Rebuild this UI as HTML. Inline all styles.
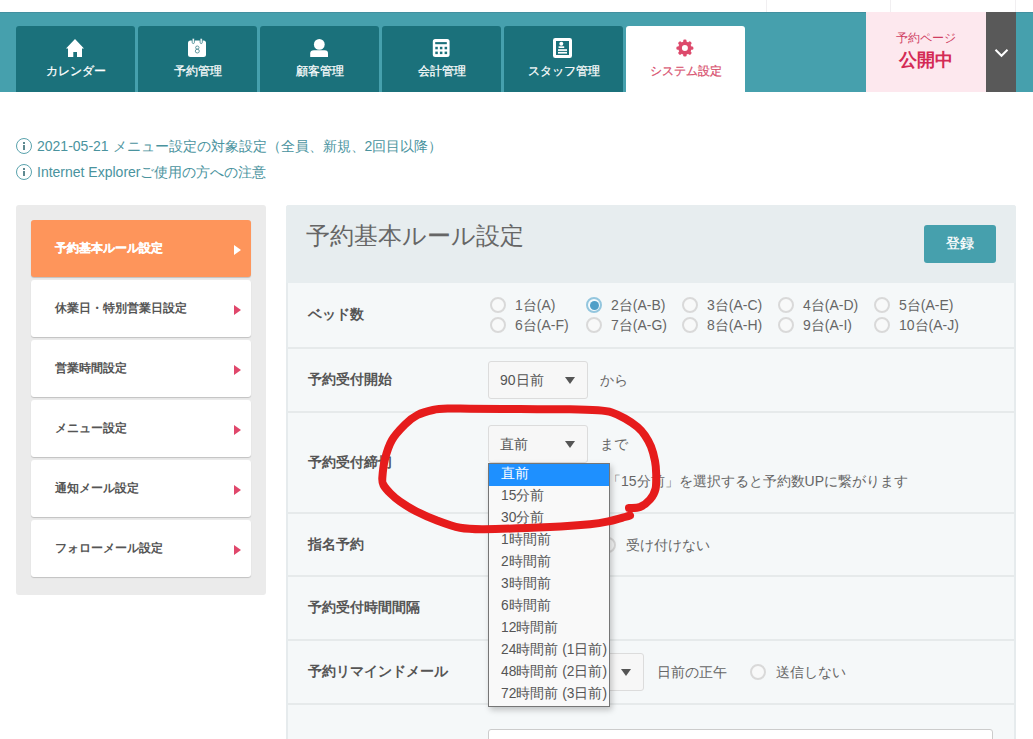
<!DOCTYPE html>
<html><head><meta charset="utf-8">
<style>
*{box-sizing:border-box;margin:0;padding:0}
html,body{width:1033px;height:739px;overflow:hidden;background:#fff}
body{position:relative;font-family:"Liberation Sans",sans-serif;color:#666;font-size:14px;line-height:1}
.a{position:absolute}
.vl{position:absolute;top:0;width:1px;height:12px;background:#f1eff1}
#band{left:0;top:12px;width:1033px;height:80px;background:#46a0ad;border-top:1px solid #4290a0}
.tab{position:absolute;top:26px;width:119px;height:66px;background:#1b717b;border-radius:3px 3px 0 0;color:#fff}
.tab .lb{-webkit-text-stroke:0.25px currentColor;position:absolute;left:0;width:100%;top:38px;text-align:center;font-size:12px;line-height:14px;white-space:nowrap}
.tab svg{position:absolute;left:0;top:0}
.tab.on{background:#fff;color:#d8516f}
#pink{left:866px;top:12px;width:120px;height:80px;background:#fde8ee;text-align:center}
#pink .t1{position:absolute;left:0;width:100%;top:19px;font-size:12px;line-height:14px;color:#cf3e62}
#pink .t2{position:absolute;left:0;width:100%;top:39px;font-size:18px;line-height:18px;font-weight:bold;color:#d42a55}
#dark{left:986px;top:12px;width:30px;height:80px;background:#595959}
.info{position:absolute;left:16px;height:16px;color:#4a939e;font-size:14px;line-height:16px;white-space:nowrap}
.info .ic{position:absolute;left:0;top:0;width:16px;height:16px;border:1.3px solid #5aa3ad;border-radius:50%}
.info .ic:before{content:"";position:absolute;left:6.2px;top:3px;width:1.4px;height:1.6px;background:#5f8a91}
.info .ic:after{content:"";position:absolute;left:6.2px;top:5.6px;width:1.4px;height:5.8px;background:#5f8a91}
.info .tx{position:absolute;left:21px;top:0}
#side{left:16px;top:205px;width:250px;height:390px;background:#ebebeb;border-radius:3px}
.si{position:absolute;left:31px;width:220px;height:57px;background:#fff;border-radius:3px;box-shadow:0 1px 1px rgba(0,0,0,.18);color:#555;font-weight:bold;font-size:12px}
.si .tx{position:absolute;left:24px;top:20.5px;line-height:14px;white-space:nowrap}
.si .tri{position:absolute;left:203px;top:24.5px;width:0;height:0;border-left:7px solid #e0476b;border-top:5.5px solid transparent;border-bottom:5.5px solid transparent}
.si.on{background:#fe955b;color:#fff}
.si.on .tx{-webkit-text-stroke:0.2px #fff}
.si.on .tri{border-left-color:#fff}
#panel{left:286px;top:205px;width:730px;height:560px;background:#f5f8f9;border:2px solid #e6ebed;border-top:0;border-radius:3px 3px 0 0}
#phead{left:286px;top:205px;width:730px;height:78px;background:#e7edef;border-radius:3px 3px 0 0}
#title{left:306px;top:223px;font-size:23.7px;line-height:26px;color:#666;white-space:nowrap}
#btn{-webkit-text-stroke:0.3px #fff;left:924px;top:225px;width:72px;height:38px;background:#46a0ad;border-radius:3px;color:#fff;font-size:14px;line-height:36px;text-align:center}
.div{position:absolute;left:288px;width:726px;height:2px;background:#e6eaeb}
.lab{position:absolute;left:308px;font-weight:bold;font-size:14px;line-height:16px;color:#555;white-space:nowrap}
.rad{position:absolute;width:16px;height:16px;border:2px solid #d9d9d9;border-radius:50%;background:#f8f9f9}
.rad.on{border-color:#93c6de;background:#f4fafd}
.rad.on:after{content:"";position:absolute;left:1.5px;top:1.5px;width:9px;height:9px;border-radius:50%;background:#4f9fc8}
.txt{position:absolute;font-size:14px;line-height:16px;color:#666;white-space:nowrap}
.sel{position:absolute;height:38px;background:#f7f7f7;border:1px solid #dcdcdc;border-radius:3px}
.sel .v{position:absolute;left:11px;top:10px;font-size:14px;line-height:16px;color:#555;white-space:nowrap}
.sel .ar{position:absolute;top:15px;width:0;height:0;border-top:7px solid #555;border-left:5.5px solid transparent;border-right:5.5px solid transparent}
#dd{left:488px;top:463px;width:122px;height:244px;background:#f9f9f9;border:1px solid #767676;box-shadow:2px 3px 6px rgba(0,0,0,.22)}
#dd .it{position:absolute;left:0;width:120px;height:22px;font-size:13.8px;line-height:20px;padding-left:12px;color:#555;white-space:nowrap}
#dd .it.on{background:#1e90ff;color:#fff}
#inp{left:488px;top:729px;width:505px;height:40px;background:#fff;border:1px solid #ccc;border-radius:3px}
</style></head><body>
<div class="vl" style="left:766px"></div>
<div class="vl" style="left:890px"></div>
<div class="vl" style="left:1015px"></div>
<div id="band" class="a"></div>

<div class="tab" style="left:16px">
<svg width="119" height="66"><path d="M59 13 L68 22.5 L66 22.5 L66 31 L61 31 L61 26 L57.3 26 L57.3 31 L52 31 L52 22.5 L50 22.5 Z" fill="#fff"/></svg>
<div class="lb">カレンダー</div></div>
<div class="tab" style="left:138px">
<svg width="119" height="66"><rect x="50" y="14.6" width="18" height="16.4" rx="2.5" fill="#fff"/><rect x="54.2" y="12.3" width="2.2" height="5.2" rx="1.1" fill="#fff" stroke="#1b717b" stroke-width="0.7"/><rect x="62.1" y="12.3" width="2.2" height="5.2" rx="1.1" fill="#fff" stroke="#1b717b" stroke-width="0.7"/><g fill="none" stroke="#4f8c94" stroke-width="0.9"><ellipse cx="59.3" cy="21.6" rx="1.7" ry="1.6"/><ellipse cx="59.3" cy="25.1" rx="2" ry="1.9"/></g></svg>
<div class="lb">予約管理</div></div>
<div class="tab" style="left:260px">
<svg width="119" height="66"><circle cx="59.3" cy="18.4" r="5.4" fill="#fff"/><path d="M50.2 31 L50.2 27.5 Q50.2 24.3 54 24.3 L64.5 24.3 Q68 24.3 68 27.5 L68 31 Z" fill="#fff"/></svg>
<div class="lb">顧客管理</div></div>
<div class="tab" style="left:382px">
<svg width="119" height="66"><rect x="50.8" y="13.1" width="16.8" height="17.9" rx="2.5" fill="#fff"/><rect x="53.2" y="16.1" width="11.6" height="2.1" fill="#1b717b"/><g fill="#1b717b"><rect x="53.3" y="20.8" width="2.5" height="2.5"/><rect x="57.9" y="20.8" width="2.5" height="2.5"/><rect x="62.6" y="20.8" width="2.5" height="2.5"/><rect x="53.3" y="25.6" width="2.5" height="2.5"/><rect x="57.9" y="25.6" width="2.5" height="2.5"/><rect x="62.6" y="25.6" width="2.5" height="2.5"/></g></svg>
<div class="lb">会計管理</div></div>
<div class="tab" style="left:504px">
<svg width="119" height="66"><rect x="50.5" y="13.5" width="16" height="17" fill="none" stroke="#fff" stroke-width="3" rx="0.8"/><circle cx="57.3" cy="17.8" r="2" fill="#fff"/><rect x="54.6" y="20.3" width="5.6" height="1.7" fill="#fff"/><rect x="54" y="23.2" width="9" height="1.7" fill="#fff"/><rect x="54" y="25.9" width="9" height="1.7" fill="#fff"/></svg>
<div class="lb">スタッフ管理</div></div>
<div class="tab on" style="left:626px">
<svg width="119" height="66"><circle cx="58.90" cy="22.10" r="4.8" fill="none" stroke="#dd4a6c" stroke-width="3.6"/><rect x="57.20" y="13.60" width="3.4" height="4.4" rx="1.3" fill="#dd4a6c" transform="rotate(0 58.90 22.10)"/><rect x="57.20" y="13.60" width="3.4" height="4.4" rx="1.3" fill="#dd4a6c" transform="rotate(45 58.90 22.10)"/><rect x="57.20" y="13.60" width="3.4" height="4.4" rx="1.3" fill="#dd4a6c" transform="rotate(90 58.90 22.10)"/><rect x="57.20" y="13.60" width="3.4" height="4.4" rx="1.3" fill="#dd4a6c" transform="rotate(135 58.90 22.10)"/><rect x="57.20" y="13.60" width="3.4" height="4.4" rx="1.3" fill="#dd4a6c" transform="rotate(180 58.90 22.10)"/><rect x="57.20" y="13.60" width="3.4" height="4.4" rx="1.3" fill="#dd4a6c" transform="rotate(225 58.90 22.10)"/><rect x="57.20" y="13.60" width="3.4" height="4.4" rx="1.3" fill="#dd4a6c" transform="rotate(270 58.90 22.10)"/><rect x="57.20" y="13.60" width="3.4" height="4.4" rx="1.3" fill="#dd4a6c" transform="rotate(315 58.90 22.10)"/></svg>
<div class="lb">システム設定</div></div>

<div id="pink" class="a"><div class="t1">予約ページ</div><div class="t2">公開中</div></div>
<div id="dark" class="a"><svg width="30" height="80"><path d="M9.5 37.8 L15.5 43.8 L21.5 37.8" fill="none" stroke="#fff" stroke-width="2"/></svg></div>

<div class="info" style="top:138px"><span class="ic"></span><span class="tx">2021-05-21 メニュー設定の対象設定（全員、新規、2回目以降）</span></div>
<div class="info" style="top:164px"><span class="ic"></span><span class="tx">Internet Explorerご使用の方への注意</span></div>

<div id="side" class="a"></div>
<div class="si on" style="top:220px"><span class="tx">予約基本ルール設定</span><span class="tri"></span></div>
<div class="si" style="top:280px"><span class="tx">休業日・特別営業日設定</span><span class="tri"></span></div>
<div class="si" style="top:340px"><span class="tx">営業時間設定</span><span class="tri"></span></div>
<div class="si" style="top:400px"><span class="tx">メニュー設定</span><span class="tri"></span></div>
<div class="si" style="top:460px"><span class="tx">通知メール設定</span><span class="tri"></span></div>
<div class="si" style="top:520px"><span class="tx">フォローメール設定</span><span class="tri"></span></div>

<div id="panel" class="a"></div>
<div id="phead" class="a"></div>
<div id="title" class="a">予約基本ルール設定</div>
<div id="btn" class="a">登録</div>

<div class="div" style="top:347px"></div>
<div class="div" style="top:411px"></div>
<div class="div" style="top:512px"></div>
<div class="div" style="top:575px"></div>
<div class="div" style="top:639px"></div>
<div class="div" style="top:703px"></div>

<!-- row1 -->
<div class="lab" style="top:306px">ベッド数</div>
<div class="rad" style="left:490px;top:297px"></div><div class="txt" style="left:515px;top:297px">1台(A)</div>
<div class="rad on" style="left:586px;top:297px"></div><div class="txt" style="left:611px;top:297px">2台(A-B)</div>
<div class="rad" style="left:682px;top:297px"></div><div class="txt" style="left:707px;top:297px">3台(A-C)</div>
<div class="rad" style="left:778px;top:297px"></div><div class="txt" style="left:803px;top:297px">4台(A-D)</div>
<div class="rad" style="left:874px;top:297px"></div><div class="txt" style="left:899px;top:297px">5台(A-E)</div>
<div class="rad" style="left:490px;top:316.5px"></div><div class="txt" style="left:515px;top:316.5px">6台(A-F)</div>
<div class="rad" style="left:586px;top:316.5px"></div><div class="txt" style="left:611px;top:316.5px">7台(A-G)</div>
<div class="rad" style="left:682px;top:316.5px"></div><div class="txt" style="left:707px;top:316.5px">8台(A-H)</div>
<div class="rad" style="left:778px;top:316.5px"></div><div class="txt" style="left:803px;top:316.5px">9台(A-I)</div>
<div class="rad" style="left:874px;top:316.5px"></div><div class="txt" style="left:899px;top:316.5px">10台(A-J)</div>

<!-- row2 -->
<div class="lab" style="top:371px">予約受付開始</div>
<div class="sel" style="left:488px;top:361px;width:100px"><span class="v">90日前</span><span class="ar" style="left:76px"></span></div>
<div class="txt" style="left:600px;top:372px">から</div>

<!-- row3 -->
<div class="lab" style="top:454px">予約受付締切</div>
<div class="sel" style="left:488px;top:425px;width:100px"><span class="v">直前</span><span class="ar" style="left:76px"></span></div>
<div class="txt" style="left:600px;top:436px">まで</div>
<div class="txt" style="left:607px;top:473px">「15分前」を選択すると予約数UPに繋がります</div>

<!-- row4 -->
<div class="lab" style="top:536px">指名予約</div>
<div class="rad" style="left:600px;top:537px"></div>
<div class="txt" style="left:626px;top:537px">受け付けない</div>

<!-- row5 -->
<div class="lab" style="top:599px">予約受付時間間隔</div>

<!-- row6 -->
<div class="lab" style="top:663px">予約リマインドメール</div>
<div class="sel" style="left:488px;top:653px;width:156px"><span class="v">1</span><span class="ar" style="left:132px"></span></div>
<div class="txt" style="left:657px;top:664px">日前の正午</div>
<div class="rad" style="left:750px;top:664px"></div>
<div class="txt" style="left:776px;top:664px">送信しない</div>

<div id="inp" class="a"></div>



<div id="dd" class="a">
<div class="it on" style="top:0">直前</div>
<div class="it" style="top:22px">15分前</div>
<div class="it" style="top:44px">30分前</div>
<div class="it" style="top:66px">1時間前</div>
<div class="it" style="top:88px">2時間前</div>
<div class="it" style="top:110px">3時間前</div>
<div class="it" style="top:132px">6時間前</div>
<div class="it" style="top:154px">12時間前</div>
<div class="it" style="top:176px">24時間前 (1日前)</div>
<div class="it" style="top:198px">48時間前 (2日前)</div>
<div class="it" style="top:220px">72時間前 (3日前)</div>
</div>
<svg class="a" style="left:0;top:0" width="1033" height="739">
<path d="M629.0 508.0 C630.8 507.8 636.5 508.4 640.0 507.0 C643.5 505.6 647.4 502.5 650.0 499.5 C652.6 496.5 654.5 493.2 655.5 489.0 C656.5 484.8 656.3 478.7 656.2 474.0 C656.1 469.3 655.9 465.6 655.0 461.0 C654.1 456.4 652.7 450.8 651.0 446.5 C649.3 442.2 647.2 438.8 645.0 435.5 C642.8 432.2 640.8 429.8 637.5 427.0 C634.2 424.2 629.2 420.9 625.0 418.5 C620.8 416.1 616.5 413.9 612.0 412.5 C607.5 411.1 605.0 410.8 598.0 410.3 C591.0 409.8 583.0 409.5 570.0 409.3 C557.0 409.1 536.7 409.2 520.0 409.1 C503.3 409.0 482.0 408.8 470.0 408.7 C458.0 408.6 454.2 408.4 448.0 408.6 C441.8 408.8 438.1 408.9 433.0 410.0 C427.9 411.1 422.2 412.6 417.5 415.0 C412.8 417.4 409.2 420.3 405.0 424.5 C400.8 428.7 395.3 434.2 392.0 440.0 C388.7 445.8 386.6 452.7 385.0 459.0 C383.4 465.3 382.6 473.7 382.3 478.0 C382.1 482.3 382.1 482.4 383.5 485.0 C384.9 487.6 387.8 490.8 390.5 493.5 C393.2 496.2 395.8 498.6 400.0 501.5 C404.2 504.4 409.3 507.8 415.5 511.0 C421.7 514.2 429.6 517.7 437.0 520.5 C444.4 523.3 452.2 526.3 460.0 527.8 C467.8 529.2 469.0 529.3 484.0 529.2 C499.0 529.1 532.3 527.8 550.0 527.0 C567.7 526.2 580.0 525.2 590.0 524.2 C600.0 523.2 604.2 522.2 610.0 521.0 C615.8 519.8 621.7 517.9 625.0 517.0 C628.3 516.1 629.2 515.8 630.0 515.5" fill="none" stroke="#e61c1c" stroke-width="8" stroke-linecap="round" stroke-linejoin="round"/>
</svg>
</body></html>
